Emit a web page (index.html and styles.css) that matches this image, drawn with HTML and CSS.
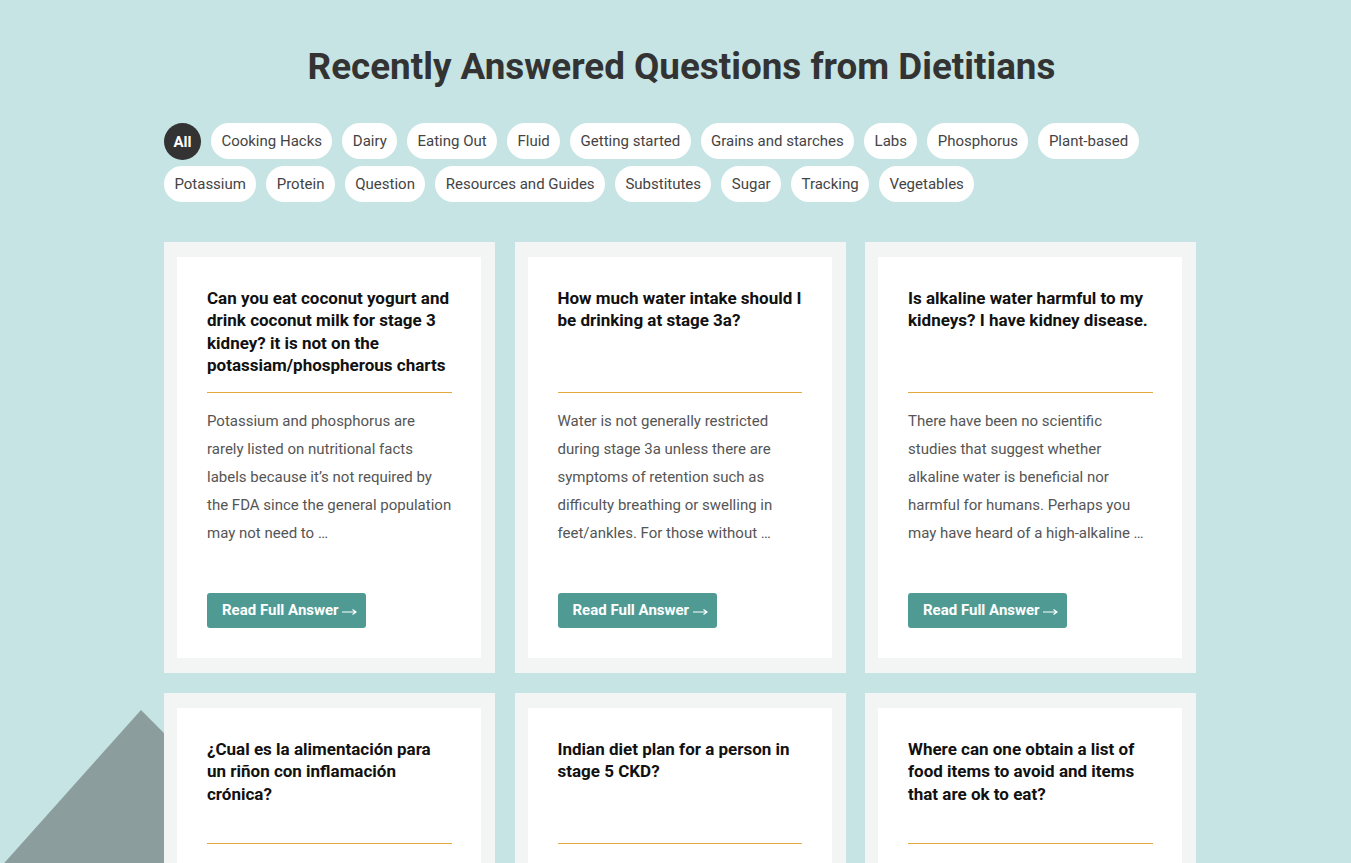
FILE: index.html
```html
<!DOCTYPE html>
<html lang="en">
<head>
    <meta charset="UTF-8">
    <meta name="viewport" content="width=device-width, initial-scale=1.0">
    <title>Recently Answered Questions from Dietitians</title>
    <link rel="stylesheet" href="styles.css">
</head>
<body>
    <!-- decorative shape behind the cards -->
    <svg class="deco" width="400" height="200" viewBox="0 0 400 200">
        <polygon points="-20,200 141,20 320,200" fill="#8b9d9c"/>
    </svg>

    <div class="wrap">
        <h1>Recently Answered Questions from Dietitians</h1>

        <div class="filters">
            <button class="pill active">All</button>
            <button class="pill">Cooking Hacks</button>
            <button class="pill">Dairy</button>
            <button class="pill">Eating Out</button>
            <button class="pill">Fluid</button>
            <button class="pill">Getting started</button>
            <button class="pill">Grains and starches</button>
            <button class="pill">Labs</button>
            <button class="pill">Phosphorus</button>
            <button class="pill">Plant-based</button>
            <button class="pill">Potassium</button>
            <button class="pill">Protein</button>
            <button class="pill">Question</button>
            <button class="pill">Resources and Guides</button>
            <button class="pill">Substitutes</button>
            <button class="pill">Sugar</button>
            <button class="pill">Tracking</button>
            <button class="pill">Vegetables</button>
        </div>

        <div class="cards">
            <div class="card">
                <div class="card-inner">
                    <h3>Can you eat coconut yogurt and drink coconut milk for stage 3 kidney? it is not on the potassiam/phospherous charts</h3>
                    <p>Potassium and phosphorus are rarely listed on nutritional facts labels because it’s not required by the FDA since the general population may not need to …</p>
                    <a class="read-btn" href="#">Read Full Answer <svg class="arrow" width="15" height="8" viewBox="0 0 15 8"><path d="M0 4h14M10.5 1.5L14 4l-3.5 2.5" fill="none" stroke="#fff" stroke-width="1.2"/></svg></a>
                </div>
            </div>
            <div class="card">
                <div class="card-inner">
                    <h3>How much water intake should I be drinking at stage 3a?</h3>
                    <p>Water is not generally restricted during stage 3a unless there are symptoms of retention such as difficulty breathing or swelling in feet/ankles. For those without …</p>
                    <a class="read-btn" href="#">Read Full Answer <svg class="arrow" width="15" height="8" viewBox="0 0 15 8"><path d="M0 4h14M10.5 1.5L14 4l-3.5 2.5" fill="none" stroke="#fff" stroke-width="1.2"/></svg></a>
                </div>
            </div>
            <div class="card">
                <div class="card-inner">
                    <h3>Is alkaline water harmful to my kidneys? I have kidney disease.</h3>
                    <p>There have been no scientific studies that suggest whether alkaline water is beneficial nor harmful for humans. Perhaps you may have heard of a high-alkaline …</p>
                    <a class="read-btn" href="#">Read Full Answer <svg class="arrow" width="15" height="8" viewBox="0 0 15 8"><path d="M0 4h14M10.5 1.5L14 4l-3.5 2.5" fill="none" stroke="#fff" stroke-width="1.2"/></svg></a>
                </div>
            </div>
            <div class="card">
                <div class="card-inner">
                    <h3>¿Cual es la alimentación para un riñon con inflamación crónica?</h3>
                    <p>Una dieta saludable para los riñones incluye frutas y verduras bajas en potasio, proteína en porciones adecuadas y poca sal …</p>
                    <a class="read-btn" href="#">Read Full Answer <svg class="arrow" width="15" height="8" viewBox="0 0 15 8"><path d="M0 4h14M10.5 1.5L14 4l-3.5 2.5" fill="none" stroke="#fff" stroke-width="1.2"/></svg></a>
                </div>
            </div>
            <div class="card">
                <div class="card-inner">
                    <h3>Indian diet plan for a person in stage 5 CKD?</h3>
                    <p>Many traditional Indian dishes can fit a kidney-friendly diet with a few changes to portion sizes, lentils and the use of salt …</p>
                    <a class="read-btn" href="#">Read Full Answer <svg class="arrow" width="15" height="8" viewBox="0 0 15 8"><path d="M0 4h14M10.5 1.5L14 4l-3.5 2.5" fill="none" stroke="#fff" stroke-width="1.2"/></svg></a>
                </div>
            </div>
            <div class="card">
                <div class="card-inner">
                    <h3>Where can one obtain a list of food items to avoid and items that are ok to eat?</h3>
                    <p>Your renal dietitian is the best source for a list tailored to your lab values, but there are several general guides you can …</p>
                    <a class="read-btn" href="#">Read Full Answer <svg class="arrow" width="15" height="8" viewBox="0 0 15 8"><path d="M0 4h14M10.5 1.5L14 4l-3.5 2.5" fill="none" stroke="#fff" stroke-width="1.2"/></svg></a>
                </div>
            </div>
        </div>
    </div>
</body>
</html>
```

FILE: styles.css
```css
body {
    margin: 0;
    font-family: Roboto, "Liberation Sans", Arial, sans-serif;
    background: #c6e4e4;
    color: #333333;
    overflow: hidden;
}
.deco {
    position: absolute;
    left: 0;
    top: 690px;
    z-index: 0;
}
.wrap {
    position: relative;
    z-index: 1;
    width: 1032px;
    margin: 0 auto;
    padding: 0 0 40px 9px;
}
h1 {
    margin: 0;
    padding: 45px 0 34px 3px;
    text-align: center;
    font-size: 36.8px;
    line-height: 44px;
    font-weight: 700;
    color: #333333;
}
.filters {
    display: flex;
    flex-wrap: wrap;
    gap: 7px 10px;
    margin-bottom: 40px;
}
.pill {
    height: 36px;
    padding: 0 10.4px;
    border: none;
    border-radius: 18px;
    background: #ffffff;
    color: #444444;
    font-family: inherit;
    font-size: 15px;
    cursor: pointer;
}
.pill.active {
    background: #333333;
    color: #ffffff;
    font-weight: 700;
    padding: 0;
    width: 37px;
    height: 37px;
    border-radius: 50%;
    margin-bottom: -1px;
}
.cards {
    display: grid;
    grid-template-columns: repeat(3, 1fr);
    gap: 20px 19.5px;
}
.card {
    background: #f3f5f4;
    padding: 15px 14px 15px 13px;
}
.card-inner {
    background: #ffffff;
    padding: 30px 29.5px 30px 30px;
}
.card h3 {
    margin: 0;
    height: 90px;
    padding-bottom: 15px;
    border-bottom: 1px solid #e3a93f;
    font-size: 17px;
    line-height: 22.4px;
    font-weight: 700;
    color: #111111;
}
.card p {
    margin: 14px 0 0;
    height: 140px;
    font-size: 15px;
    line-height: 28px;
    color: #555555;
}
.read-btn {
    display: inline-block;
    margin-top: 46px;
    padding: 0 9px 0 15px;
    height: 35px;
    line-height: 35px;
    border-radius: 3px;
    background: #4f9b94;
    color: #ffffff;
    font-size: 15px;
    font-weight: 700;
    text-decoration: none;
}
.arrow {
    vertical-align: -1px;
}
```
